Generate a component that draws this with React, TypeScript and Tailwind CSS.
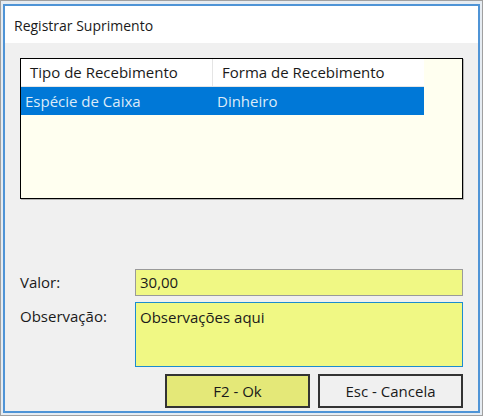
import React from "react";

const font = { fontFamily: '"Segoe UI", "Open Sans", "Noto Sans", sans-serif' };

const App = () => {
  return (
    <div
      className="w-[483px] h-[416px] border border-[#a0a0a0] bg-[#e6ecf2] pt-[3px] px-[2px] pb-[2px] text-[15px] text-[#1a1a1a]"
      style={font}
    >
      <div className="h-full border-2 border-[#4f94d6] flex flex-col">
        {/* title */}
        <div className="h-[37px] bg-white flex items-center pl-[9px] pt-[1px] shrink-0 text-[14px]">Registrar Suprimento</div>

        <div className="flex-1 bg-[#f0f0f0] px-[15px] pt-[15px]">
          {/* list */}
          <div className="h-[141px] border border-black bg-[#fffff0] shadow-[1px_1px_0_#b4b4b4]">
            <div className="w-[403px] h-[28px] bg-white border-b border-[#e5e5e5] flex items-center">
              <div className="w-[192px] h-full flex items-center pl-[9px] border-r border-[#e5e5e5]">Tipo de Recebimento</div>
              <div className="pl-[9px]">Forma de Recebimento</div>
            </div>
            <div className="w-[403px] h-[28px] bg-[#0078d7] text-[#dcebf8] flex items-center">
              <div className="w-[192px] pl-[4px]">Espécie de Caixa</div>
              <div className="pl-[4px]">Dinheiro</div>
            </div>
          </div>

          {/* form */}
          <div className="mt-[70px] flex items-center">
            <div className="w-[115px]">Valor:</div>
            <div className="w-[328px] h-[27px] border border-[#9a9a9a] bg-[#f0f884] flex items-center pl-[4px]">30,00</div>
          </div>
          <div className="mt-[6px] flex items-start">
            <div className="w-[115px] pt-[3px]">Observação:</div>
            <div className="w-[328px] h-[65px] border border-[#1c8ccf] bg-[#f0f884] pl-[4px] pt-[3px]">Observações aqui</div>
          </div>
          <div className="mt-[7px] flex justify-end gap-[8px]">
            <button className="w-[145px] h-[34px] border-2 border-[#333333] bg-[#e4e878] flex items-center justify-center">
              F2 - Ok
            </button>
            <button className="w-[145px] h-[34px] border-2 border-[#333333] bg-[#f0f0f0] flex items-center justify-center">
              Esc - Cancela
            </button>
          </div>
        </div>
      </div>
    </div>
  );
};

export default App;
